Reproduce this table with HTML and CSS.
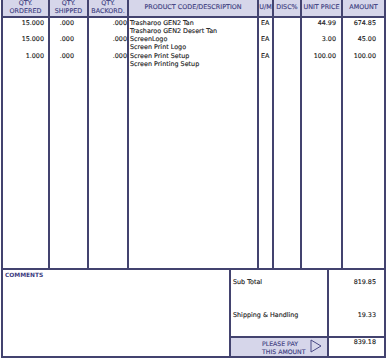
FILE: index.html
```html
<!DOCTYPE html>
<html>
<head>
<meta charset="utf-8">
<link rel="stylesheet" href="styles.css">
</head>
<body>
<div class="invoice">
  <div class="lines">
    <div class="hd">QTY.<br>ORDERED</div>
    <div class="hd">QTY.<br>SHIPPED</div>
    <div class="hd">QTY.<br>BACKORD.</div>
    <div class="hd">PRODUCT CODE/DESCRIPTION</div>
    <div class="hd">U/M</div>
    <div class="hd">DISC%</div>
    <div class="hd">UNIT PRICE</div>
    <div class="hd">AMOUNT</div>

    <div class="cell c-ord">
      <div class="ln">15.000</div><div class="ln"></div>
      <div class="ln">15.000</div><div class="ln"></div>
      <div class="ln">1.000</div><div class="ln"></div>
    </div>
    <div class="cell c-shp">
      <div class="ln">.000</div><div class="ln"></div>
      <div class="ln">.000</div><div class="ln"></div>
      <div class="ln">.000</div><div class="ln"></div>
    </div>
    <div class="cell c-bo">
      <div class="ln">.000</div><div class="ln"></div>
      <div class="ln">.000</div><div class="ln"></div>
      <div class="ln">.000</div><div class="ln"></div>
    </div>
    <div class="cell c-desc">
      <div class="ln">Trasharoo GEN2 Tan</div>
      <div class="ln">Trasharoo GEN2 Desert Tan</div>
      <div class="ln">ScreenLogo</div>
      <div class="ln">Screen Print Logo</div>
      <div class="ln">Screen Print Setup</div>
      <div class="ln">Screen Printing Setup</div>
    </div>
    <div class="cell c-um">
      <div class="ln">EA</div><div class="ln"></div>
      <div class="ln">EA</div><div class="ln"></div>
      <div class="ln">EA</div><div class="ln"></div>
    </div>
    <div class="cell c-disc"></div>
    <div class="cell c-unit">
      <div class="ln">44.99</div><div class="ln"></div>
      <div class="ln">3.00</div><div class="ln"></div>
      <div class="ln">100.00</div><div class="ln"></div>
    </div>
    <div class="cell c-amt">
      <div class="ln">674.85</div><div class="ln"></div>
      <div class="ln">45.00</div><div class="ln"></div>
      <div class="ln">100.00</div><div class="ln"></div>
    </div>
  </div>

  <div class="footer">
    <div class="comments">COMMENTS</div>
    <div class="totals">
      <div class="t-label">Sub Total</div>
      <div class="t-value">819.85</div>
      <div class="t-label">Shipping &amp; Handling</div>
      <div class="t-value">19.33</div>
      <div class="pay">
        <div class="pay-text">PLEASE PAY<br>THIS AMOUNT</div>
        <svg class="pay-arrow" width="12" height="14" viewBox="0 0 12 14"><path d="M1 1 L11 7 L1 13 Z" fill="none" stroke="#4a4a86" stroke-width="1"/></svg>
      </div>
      <div class="pay-value">839.18</div>
    </div>
  </div>
</div>
</body>
</html>
```
FILE: styles.css
```css
html, body {
  margin: 0;
  padding: 0;
  background: #ffffff;
}
body {
  font-family: "DejaVu Sans", "Verdana", sans-serif;
  font-size: 6.4px;
  color: #151515;
  -webkit-text-stroke: 0.12px currentColor;
}
.invoice {
  width: 385px;
  margin-left: 1px;
}
.lines {
  display: grid;
  grid-template-columns: 47px 39px 40px 130px 15px 28px 41px 43px;
  grid-template-rows: 18px 250px;
  border-left: 2px solid #43436f;
}
.hd {
  box-sizing: border-box;
  background: #d6d6ea;
  color: #3b3b7e;
  border-right: 2px solid #43436f;
  border-bottom: 2px solid #43436f;
  display: flex;
  align-items: center;
  justify-content: center;
  text-align: center;
  line-height: 7.6px;
  font-size: 6.4px;
  white-space: nowrap;
}
.cell {
  box-sizing: border-box;
  border-right: 2px solid #43436f;
  padding-top: 0.5px;
}
.ln {
  height: 8.3px;
  line-height: 8.3px;
  white-space: nowrap;
}
.c-ord { text-align: right; padding-right: 4px; }
.c-shp { text-align: right; padding-right: 13px; }
.c-bo { text-align: right; padding-right: 0; }
.c-desc { padding-left: 1px; }
.c-um { padding-left: 2px; }
.c-unit { text-align: right; padding-right: 5px; }
.c-amt { text-align: right; padding-right: 8px; }

.footer {
  display: flex;
  height: 90px;
  box-sizing: border-box;
  border: 2px solid #43436f;
}
.comments {
  flex: 1;
  padding: 2px 0 0 2px;
  color: #3b3b7e;
  font-weight: bold;
  font-size: 5.9px;
  line-height: 7px;
  -webkit-text-stroke: 0;
}
.totals {
  width: 155px;
  box-sizing: border-box;
  border-left: 2px solid #43436f;
  display: grid;
  grid-template-columns: 96px 57px;
  grid-template-rows: 33px 33px 20px;
}
.t-label {
  padding: 8px 0 0 2px;
  line-height: 8px;
}
.t-value {
  box-sizing: border-box;
  border-left: 2px solid #43436f;
  text-align: right;
  padding: 8px 8px 0 0;
  line-height: 8px;
}
.pay {
  box-sizing: border-box;
  border-top: 2px solid #43436f;
  background: #d6d6ea;
  display: flex;
  align-items: center;
  padding-left: 31px;
  gap: 4px;
}
.pay-text {
  color: #3b3b7e;
  font-size: 6.2px;
  line-height: 8px;
  padding-top: 1px;
}
.pay-arrow {
  display: block;
  margin-top: -2px;
}
.pay-value {
  box-sizing: border-box;
  border-top: 2px solid #43436f;
  border-left: 2px solid #43436f;
  text-align: right;
  padding: 0 8px 0 0;
  line-height: 8px;
}
```
